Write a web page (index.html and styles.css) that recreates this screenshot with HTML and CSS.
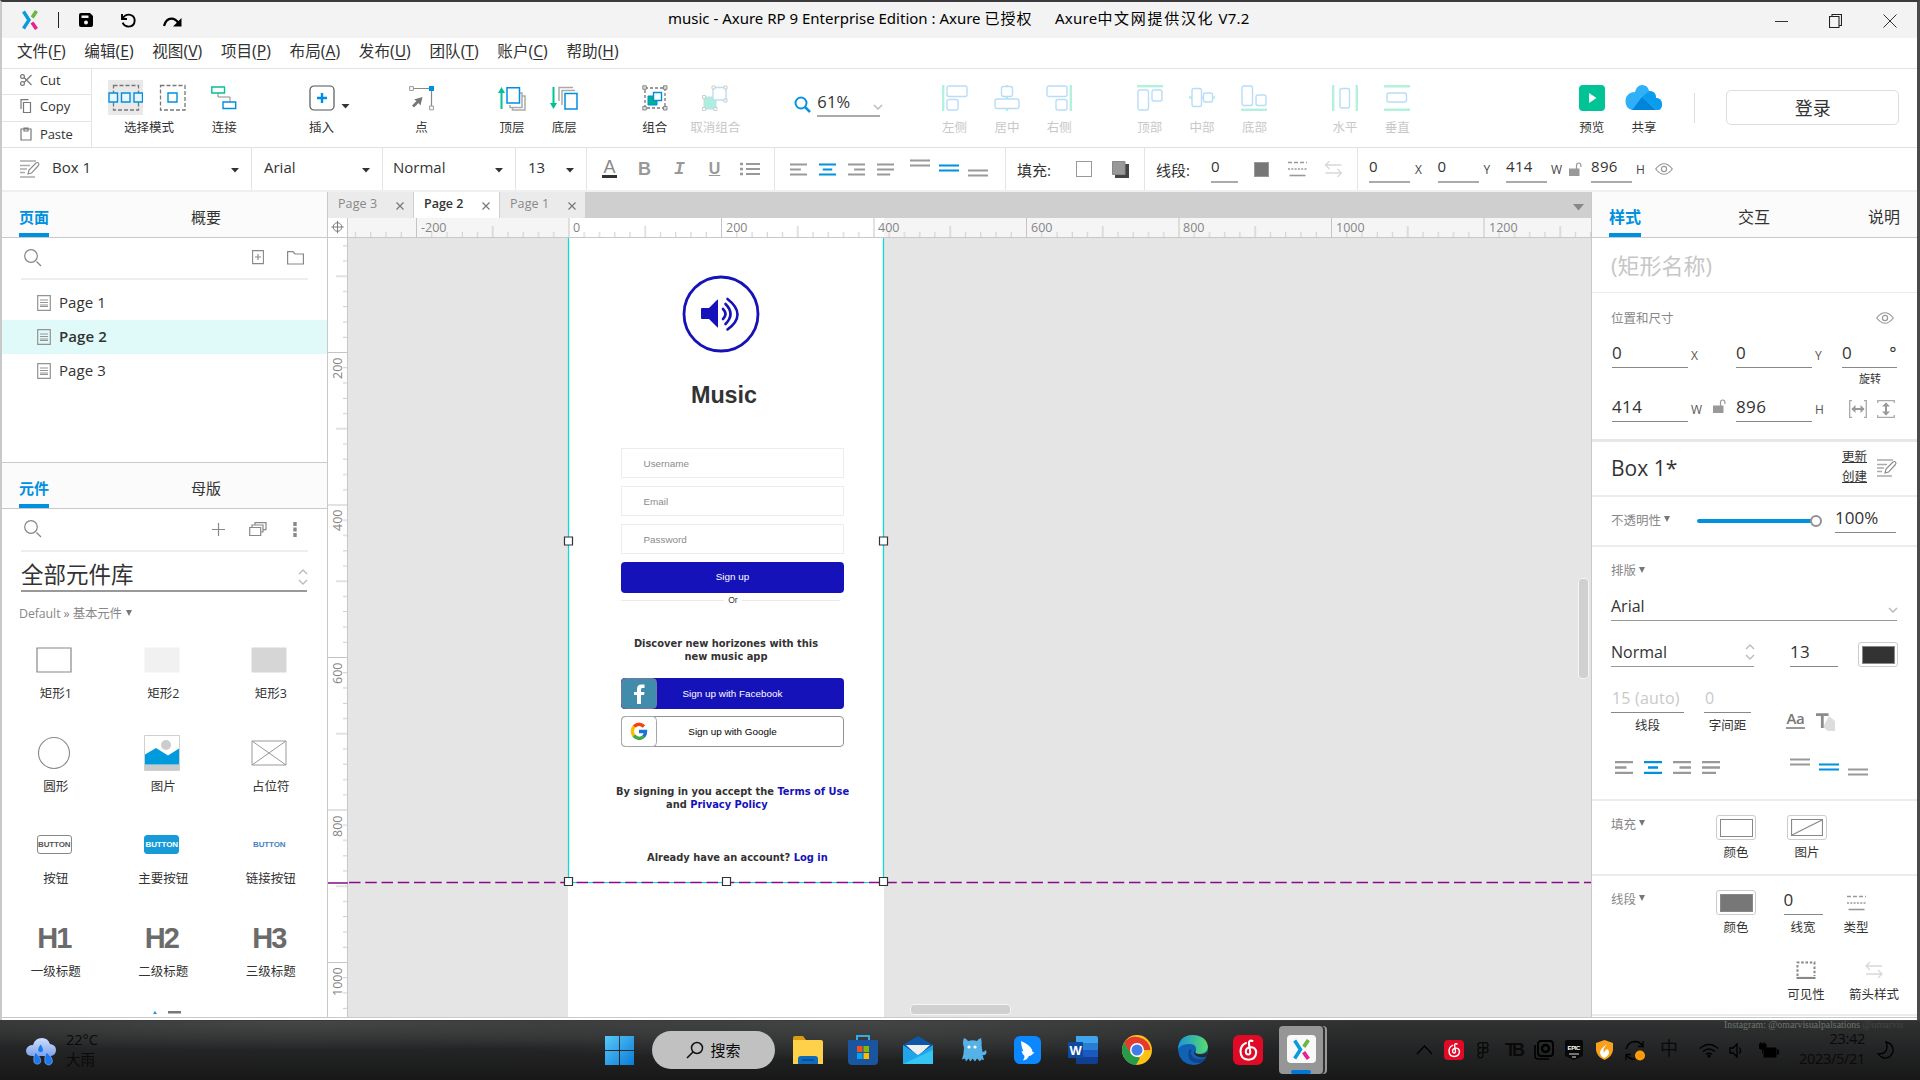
FILE: index.html
```html
<!DOCTYPE html>
<html lang="zh-CN">
<head>
<meta charset="utf-8">
<title>music - Axure RP 9 Enterprise Edition</title>
<link rel="stylesheet" href="styles.css">
</head>
<body>
<svg class="defs" width="0" height="0">
  <symbol id="logo" viewBox="0 0 16 20"><path d="M1.5 1.5 7 10 1.5 18.500" fill="none" stroke="#0a9bdc" stroke-width="3.400"/><path d="M14.500 1 10.200 7.500" stroke="#6cb644" stroke-width="3.600"/><path d="M10 12.500 14.500 19" stroke="#e5258c" stroke-width="3.600"/></symbol>
  <symbol id="search" viewBox="0 0 18 18"><circle cx="7" cy="7" r="6.300" fill="none" stroke="#858585" stroke-width="1.200"/><path d="m12.500 12.500 4.500 4.500" stroke="#858585" stroke-width="1.300"/></symbol>
  <symbol id="page" viewBox="0 0 14 16"><path d="M.7.7h12.600v14.600H.7zM3 5h8M3 7.500h8M3 10h8M3 11.500h8" fill="none" stroke="#939393" stroke-width="1.200"/></symbol>
  <symbol id="caret" viewBox="0 0 8 5"><path d="M0 0h8L4 4.500z" fill="#333"/></symbol>
  <symbol id="down" viewBox="0 0 10 6"><path d="m1 1 4 4 4-4" fill="none" stroke="#bbb" stroke-width="1.500"/></symbol>
  <symbol id="updown" viewBox="0 0 10 16"><path d="m1 5 4-4 4 4M1 11l4 4 4-4" fill="none" stroke="#bbb" stroke-width="1.400"/></symbol>
  <symbol id="edit" viewBox="0 0 20 18"><path d="M0 1h16M0 5.500h10M0 9h7M0 12.500h5M0 17h15" stroke="#aaa" stroke-width="1.500"/><path d="m8 14 1-4 7-7q1.500-1 2.500.2T18 6l-6.500 7z" fill="#fff" stroke="#888" stroke-width="1.100"/></symbol>
  <symbol id="eye" viewBox="0 0 18 12"><path d="M.7 6Q9-4.500 17.300 6 9 16.500.7 6z" fill="none" stroke="#999" stroke-width="1.200"/><circle cx="9" cy="6" r="2.600" fill="none" stroke="#999" stroke-width="1.200"/></symbol>
  <symbol id="lock" viewBox="0 0 13 15"><path d="M0 6.500h10.500v7.500H0z" fill="#999"/><path d="M7.500 7V3.500q0-2.500 2.200-2.500t2.200 2.500V5" fill="none" stroke="#999" stroke-width="1.200"/></symbol>
  <symbol id="al" viewBox="0 0 18 13"><path d="M0 1.200h18M0 6.500h11.500M0 11.800h18" stroke="currentColor" stroke-width="2.300"/></symbol>
  <symbol id="ac" viewBox="0 0 18 13"><path d="M0 1.200h18M4 6.500h10M0 11.800h18" stroke="currentColor" stroke-width="2.300"/></symbol>
  <symbol id="ar" viewBox="0 0 18 13"><path d="M0 1.200h18M6.500 6.500H18M0 11.800h18" stroke="currentColor" stroke-width="2.300"/></symbol>
  <symbol id="aj" viewBox="0 0 18 13"><path d="M0 1.200h18M0 6.500h18M0 11.800h14" stroke="currentColor" stroke-width="2.300"/></symbol>
  <symbol id="vt" viewBox="0 0 20 19"><path d="M0 1.500h20M0 6.500h20" stroke="currentColor" stroke-width="2.200"/></symbol>
  <symbol id="vm" viewBox="0 0 20 19"><path d="M0 6.500h20M0 11.500h20" stroke="currentColor" stroke-width="2.200"/></symbol>
  <symbol id="vb" viewBox="0 0 20 19"><path d="M0 11.500h20M0 16.500h20" stroke="currentColor" stroke-width="2.200"/></symbol>
  <symbol id="dash" viewBox="0 0 19 16"><path d="M0 1.500h19" stroke="#999" stroke-width="1.500" stroke-dasharray="4 2"/><path d="M0 8h19" stroke="#999" stroke-width="1.500" stroke-dasharray="2 1.300"/><path d="M1.500 14.500h16" stroke="#999" stroke-width="1.600"/></symbol>
  <symbol id="arrows" viewBox="0 0 18 16"><path d="M5 0 1 4l4 4M1 4h16M13 8l4 4-4 4M17 12H1" fill="none" stroke="#d8d8d8" stroke-width="1.300"/></symbol>
  <symbol id="netease" viewBox="0 0 30 30"><rect width="30" height="30" rx="6" fill="#e00a26"/><path d="M19.500 6q-4-1.500-3.500 3l1.200 7.500q.3 3-2 3t-2.400-3q.1-3.500 4-4.200 6-.7 6.400 5.200-.5 7-7.700 7.200-8-.3-8-8.700.4-6 5.500-8" fill="none" stroke="#fff" stroke-width="2.100" stroke-linecap="round"/></symbol>
</svg>
<div class="desktop">
<div class="window">
  <header class="titlebar">
    <svg class="t-logo" width="16" height="20"><use href="#logo"/></svg>
    <span class="t-bar"></span>
    <svg class="t-save" width="14" height="14" viewBox="0 0 14 14"><path d="M2 0h9l3 3v9q0 2-2 2H2q-2 0-2-2V2q0-2 2-2z"/><path d="M2.500 2.500h7v2.500h-7z" fill="#f3f3f3"/><circle cx="7" cy="9.500" r="2" fill="#f3f3f3"/></svg>
    <svg class="t-undo" width="15" height="15" viewBox="0 0 15 15"><path d="M1 1v5h5M1.500 5.500Q4 1.500 8 1.600q5.500.6 5.700 6-.4 5.700-6 6-4.500-.2-6-4" fill="none" stroke="#000" stroke-width="1.900"/></svg>
    <svg class="t-redo" width="19" height="10" viewBox="0 0 19 10"><path d="M1 9Q3 1.500 8.500 1.600q4 .1 7 4.500" fill="none" stroke="#000" stroke-width="2.200"/><path d="M18.500 1v8.500H10z"/></svg>
    <div class="title"><span class="title-a">music - Axure RP 9 Enterprise Edition : Axure <span>已授权</span></span><span class="title-b">Axure<span>中文网提供汉化</span> V7.2</span></div>
    <div class="winctl">
      <svg width="13" height="14" viewBox="0 0 13 14"><path d="M0 7.500h13" stroke="#333"/></svg>
      <svg width="13" height="14" viewBox="0 0 13 14"><path d="M.5 2.500h9.500v11H.5zM3 2V.5h9.500v11H10.500" fill="none" stroke="#222" stroke-width="1.100"/></svg>
      <svg width="14" height="14" viewBox="0 0 14 14"><path d="m.5.500 13 13M13.500.5l-13 13" stroke="#333"/></svg>
    </div>
  </header>
  <nav class="menubar">
    <span>文件(<u>F</u>)</span><span>编辑(<u>E</u>)</span><span>视图(<u>V</u>)</span><span>项目(<u>P</u>)</span><span>布局(<u>A</u>)</span><span>发布(<u>U</u>)</span><span>团队(<u>T</u>)</span><span>账户(<u>C</u>)</span><span>帮助(<u>H</u>)</span>
  </nav>
  <div class="toolbar">
    <div class="clip">
      <div><svg width="12" height="12" viewBox="0 0 12 12"><g fill="none" stroke="#777" stroke-width="1.200"><circle cx="2.500" cy="2.500" r="1.900"/><circle cx="2.500" cy="9.500" r="1.900"/><path d="m4 3.500 7.500 7.500M4 8.500 11.500 1"/></g></svg>Cut</div>
      <div><svg width="12" height="14" viewBox="0 0 12 14"><path d="M3.500 3.500h7v10h-7zM1 10V.7h7.500" fill="none" stroke="#777" stroke-width="1.200"/></svg>Copy</div>
      <div><svg width="12" height="14" viewBox="0 0 12 14"><path d="M1 2h10v11H1zM4 1h4v3H4z" fill="none" stroke="#777" stroke-width="1.200"/></svg>Paste</div>
    </div>
    <div class="modes">
      <div class="mode-icons">
        <svg class="on" width="35" height="35" viewBox="0 0 35 35"><path d="M5.500 5.500h25v24.500h-25z" fill="none" stroke="#777" stroke-width="1.300" stroke-dasharray="4 2"/><path d="M1 13h8.500v9H1zM13.500 13h8.500v9h-8.500zM26 13h8.500v9H26z" fill="#e9f6ff" stroke="#008fe0" stroke-width="1.400"/></svg>
        <svg width="35" height="35" viewBox="0 0 35 35"><path d="M5.500 5.500h24.500v24.500H5.500z" fill="none" stroke="#777" stroke-width="1.300" stroke-dasharray="4 2"/><path d="M13 13h9v9h-9z" fill="#fff" stroke="#008fe0" stroke-width="1.400"/></svg>
      </div>
      <span>选择模式</span>
    </div>
    <div class="tools g-link">
      <div class="tool"><svg width="26" height="26" viewBox="0 0 26 26"><path d="M7 7.500V12h12v5" fill="none" stroke="#888"/><path d="M.8 2h12.700v6H.8z" fill="#fff" stroke="#00c292" stroke-width="1.400"/><path d="M12 17h12.700v6.500H12z" fill="#fff" stroke="#008fe0" stroke-width="1.400"/></svg>连接</div>
    </div>
    <div class="tools g-insert">
      <div class="tool"><svg width="26" height="26" viewBox="0 0 26 26"><rect x="1" y="1" width="24" height="24" rx="4" fill="#fff" stroke="#555" stroke-width="1.200"/><path d="M13 8v10M8 13h10" stroke="#008fe0" stroke-width="2.400"/></svg>插入</div>
      <svg class="ins-caret" width="9" height="5"><use href="#caret"/></svg>
    </div>
    <div class="tools g-point">
      <div class="tool"><svg width="26" height="26" viewBox="0 0 26 26"><path d="M3 3.500h19.500v20" fill="none" stroke="#888" stroke-width="1.200"/><path d="M.6 1.600h3.800v3.800H.6zM20.600 21h3.800v3.800h-3.800z" fill="#fff" stroke="#999"/><path d="M20 1h5v5h-5z" fill="#008fe0"/><path d="M13.500 12 11.500 20.500 9.500 18 5 22.500l-2-2L7.500 16 5 14.500z" fill="#777"/></svg>点</div>
    </div>
    <div class="tools g-order">
      <div class="tool"><svg width="28" height="26" viewBox="0 0 28 26"><path d="M12 20v2.500h12V8h-2.500M14.500 23v2h12.500V11h-2.500" fill="none" stroke="#aaa" stroke-width="1.500"/><path d="M9 2.800h12.500V18H9z" fill="#fff" stroke="#008fe0" stroke-width="1.500"/><path d="M3.500 24V5" stroke="#00c292" stroke-width="2"/><path d="m0 8 3.500-6L7 8z" fill="#00c292"/></svg>顶层</div>
      <div class="tool"><svg width="28" height="26" viewBox="0 0 28 26"><path d="M9 16V2.500h14M12 20V5.500h13" fill="none" stroke="#aaa" stroke-width="1.500"/><path d="M15 8.500h12V24H15z" fill="#fff" stroke="#008fe0" stroke-width="1.500"/><path d="M3.500 2v18" stroke="#00c292" stroke-width="2"/><path d="m0 18 3.500 6L7 18z" fill="#00c292"/></svg>底层</div>
    </div>
    <div class="tools g-group">
      <div class="tool"><svg width="26" height="26" viewBox="0 0 26 26"><path d="M3 3h20v20H3z" fill="none" stroke="#777" stroke-width="1.300" stroke-dasharray="3 2"/><path d="M.8.8h3.500v3.500H.8zM21.500.8H25v3.500h-3.500zM.8 21.500h3.500V25H.8zM21.500 21.500H25V25h-3.500z" fill="#ddd" stroke="#888"/><path d="M6 11h9v9H6z" fill="#00b090" stroke="#008fe0"/><path d="M11.500 7.500h8v8h-8z" fill="#fff" stroke="#008fe0" stroke-width="1.400"/></svg>组合</div>
      <div class="tool off"><svg width="26" height="26" viewBox="0 0 26 26"><path d="M2 12h12v12H2z" fill="#aeeedd" stroke="#b9dff3"/><path d="M11 2.500h13V15H11z" fill="#fff" stroke="#b9dff3" stroke-width="1.400"/><path d="M10 1h3v3h-3zM22 1h3v3h-3zM22 14h3v3h-3zM.6 10.500h3v3h-3zM.6 22.500h3v3h-3zM12 22.500h3v3h-3z" fill="#fff" stroke="#ccc"/></svg>取消组合</div>
    </div>
    <div class="zoom">
      <svg width="17" height="17" viewBox="0 0 17 17"><circle cx="7" cy="7" r="5.500" fill="none" stroke="#0a92e0" stroke-width="2"/><path d="m11 11 5 5" stroke="#0a92e0" stroke-width="2.500"/></svg>
      <div class="zoom-field">61%<svg width="10" height="6"><use href="#down"/></svg></div>
    </div>
    <div class="tools off g-h">
      <div class="tool"><svg width="26" height="26" viewBox="0 0 26 26"><path d="M1.200 0v26" class="gr"/><rect x="5" y="1" width="20" height="10.500" rx="2"/><rect x="5" y="14.500" width="11" height="10.500" rx="2"/></svg>左侧</div>
      <div class="tool"><svg width="26" height="26" viewBox="0 0 26 26"><path d="M13-1v27" class="gr"/><rect x="7.500" y="1.500" width="11" height="10" rx="2"/><rect x="1" y="14" width="24" height="9.500" rx="2"/></svg>居中</div>
      <div class="tool"><svg width="26" height="26" viewBox="0 0 26 26"><path d="M24.800 0v26" class="gr"/><rect x="1" y="1" width="20" height="10.500" rx="2"/><rect x="10" y="14.500" width="11" height="10.500" rx="2"/></svg>右侧</div>
    </div>
    <div class="tools off g-v">
      <div class="tool"><svg width="26" height="26" viewBox="0 0 26 26"><path d="M0 1.200h26" class="gr"/><rect x="1" y="5" width="10.500" height="20" rx="2"/><rect x="15" y="5" width="10" height="11" rx="2"/></svg>顶部</div>
      <div class="tool"><svg width="26" height="26" viewBox="0 0 26 26"><path d="M0 12.500h26" class="gr"/><rect x="3" y="3.500" width="9.500" height="18" rx="2"/><rect x="14.500" y="8" width="9" height="9" rx="2"/></svg>中部</div>
      <div class="tool"><svg width="26" height="26" viewBox="0 0 26 26"><path d="M0 24.800h26" class="gr"/><rect x="1" y="1" width="10.500" height="19.500" rx="2"/><rect x="15" y="10" width="10" height="10.500" rx="2"/></svg>底部</div>
    </div>
    <div class="tools off g-d">
      <div class="tool"><svg width="26" height="26" viewBox="0 0 26 26"><path d="M1.200 0v26M24.800 0v26" class="gr"/><rect x="8" y="3.500" width="9.500" height="19.500" rx="2"/></svg>水平</div>
      <div class="tool"><svg width="26" height="26" viewBox="0 0 26 26"><path d="M0 1.200h26M0 24.800h26" class="gr"/><rect x="3" y="8" width="19.500" height="9" rx="2"/></svg>垂直</div>
    </div>
    <div class="tools g-share">
      <div class="tool"><svg width="26" height="26" viewBox="0 0 26 26"><rect width="26" height="26" rx="4" fill="#00c496"/><path d="m10 8 7.500 5-7.500 5z" fill="#fff"/></svg>预览</div>
      <div class="tool"><svg width="38" height="26" viewBox="0 0 38 26"><path d="M7 25Q0 23 .5 15 2 7 10 7q2-7 7-7 6 0 7 6 7 0 7 7 6 0 6 7-.5 5-4 5z" fill="#2fb0f8"/><path d="M7 25 17 12l14 13z" fill="#0085dc"/><path d="m17 12 7-6q7 0 7 7 6 0 6 7-.5 5-5 5z" fill="#0c9cee"/></svg>共享</div>
    </div>
    <div class="login"><span>登录</span></div>
  </div>
  <div class="formatbar">
    <div class="f f1"><svg width="20" height="18"><use href="#edit"/></svg><span>Box 1</span><svg class="c" width="8" height="5"><use href="#caret"/></svg></div>
    <div class="f f2"><span>Arial</span><svg class="c" width="8" height="5"><use href="#caret"/></svg></div>
    <div class="f f3"><span>Normal</span><svg class="c" width="8" height="5"><use href="#caret"/></svg></div>
    <div class="f f4"><span>13</span><svg class="c" width="8" height="5"><use href="#caret"/></svg></div>
    <div class="f f5">
      <b class="fa">A</b><b>B</b><b class="fi">I</b><b class="fu">U</b>
      <svg width="20" height="14" viewBox="0 0 20 14"><path d="M6 2h14M6 7h14M6 12h14" stroke="#999" stroke-width="1.800"/><path d="M0 2h3M0 7h3M0 12h3" stroke="#999" stroke-width="2.500"/></svg>
    </div>
    <div class="f f6">
      <svg width="17" height="13"><use href="#al"/></svg><svg class="blue" width="17" height="13"><use href="#ac"/></svg><svg width="17" height="13"><use href="#ar"/></svg><svg width="17" height="13"><use href="#aj"/></svg>
      <svg class="v1" width="20" height="19"><use href="#vt"/></svg><svg class="v2 blue" width="20" height="19"><use href="#vm"/></svg><svg class="v2" width="20" height="19"><use href="#vb"/></svg>
    </div>
    <div class="f f7"><span>填充:</span><i class="sw-w"></i><svg width="17" height="17" viewBox="0 0 17 17"><path d="M3 3h14v14H3z" fill="#444"/><path d="M.5.500h12.500v13H.5z" fill="#999" stroke="#888"/></svg></div>
    <div class="f f8"><span>线段:</span><div class="uf u0">0</div><i class="sw-g"></i><svg class="d1" width="19" height="16"><use href="#dash"/></svg><svg class="d2" width="19" height="16"><use href="#arrows"/></svg></div>
    <div class="f f9"><div class="uf">0</div><em>X</em><div class="uf">0</div><em>Y</em><div class="uf">414</div><em class="ew">W</em><svg class="lk" width="13" height="15"><use href="#lock"/></svg><div class="uf">896</div><em class="eh">H</em><svg width="18" height="12"><use href="#eye"/></svg></div>
  </div>
  <main class="work">
    <aside class="left">
      <div class="ptabs"><b>页面</b><span>概要</span></div>
      <div class="pages">
        <div class="psearch"><svg width="18" height="18"><use href="#search"/></svg>
          <svg class="s-add" width="12" height="15" viewBox="0 0 12 15"><path d="M.6.6h10.800v13H.6zM6 4v6M3 7h6" fill="none" stroke="#888" stroke-width="1.100"/></svg>
          <svg width="17" height="14" viewBox="0 0 17 14"><path d="M.6.6h5.400l2 2.400h8.400v10H.6z" fill="none" stroke="#888" stroke-width="1.200"/></svg></div>
        <div class="tree">
          <div><svg width="14" height="16"><use href="#page"/></svg>Page 1</div>
          <div class="sel"><svg width="14" height="16"><use href="#page"/></svg>Page 2</div>
          <div><svg width="14" height="16"><use href="#page"/></svg>Page 3</div>
        </div>
      </div>
      <div class="ptabs"><b>元件</b><span>母版</span></div>
      <div class="lib">
        <div class="psearch"><svg width="18" height="18"><use href="#search"/></svg>
          <svg class="s-plus" width="13" height="13" viewBox="0 0 13 13"><path d="M6.500 0v13M0 6.500h13" stroke="#888" stroke-width="1.200"/></svg>
          <svg class="s-cards" width="18" height="14" viewBox="0 0 18 14"><path d="M.7 5.500h11v8h-11zM3 5V3h11v7h-2M6 2.500V.7h11v7h-2.500" fill="none" stroke="#888" stroke-width="1.200"/></svg>
          <svg width="4" height="15" viewBox="0 0 4 15"><path d="M2 0v4M2 5.500v4M2 11v4" stroke="#888" stroke-width="3.400"/></svg></div>
        <div class="libsel">全部元件库<svg width="10" height="16"><use href="#updown"/></svg></div>
        <div class="crumb">Default » 基本元件 <svg width="6" height="6" viewBox="0 0 6 6"><path d="M0 0h6L3 6z" fill="#777"/></svg></div>
        <div class="widgets">
          <div><svg width="36" height="36" viewBox="0 0 36 36"><path d="M1 6h34v24H1z" fill="#fff" stroke="#888" stroke-width="1.200"/></svg>矩形1</div>
          <div><svg width="36" height="36" viewBox="0 0 36 36"><path d="M.5 5.500h35v25H.5z" fill="#f1f1f1"/></svg>矩形2</div>
          <div><svg width="36" height="36" viewBox="0 0 36 36"><path d="M.5 5.500h35v25H.5z" fill="#d6d6d6"/></svg>矩形3</div>
          <div><svg width="36" height="36" viewBox="0 0 36 36"><circle cx="18" cy="18" r="15.500" fill="#fff" stroke="#888" stroke-width="1.100"/></svg>圆形</div>
          <div><svg width="36" height="36" viewBox="0 0 36 36"><path d="M.5.500h35v35H.5z" fill="#fff" stroke="#d0d0d0"/><path d="M1 29.500h34V35H1z" fill="#cacaca"/><circle cx="22" cy="10" r="5" fill="#ccc"/><path d="M1 19.500 12 13l12 7.500L35 13.500v16H1z" fill="#009bdc"/></svg>图片</div>
          <div><svg width="36" height="36" viewBox="0 0 36 36"><path d="M1 6h34v24H1zl34 24M35 6 1 30" fill="#fff" stroke="#999"/></svg>占位符</div>
          <div><span class="wb">BUTTON</span>按钮</div>
          <div><span class="wb wb2">BUTTON</span>主要按钮</div>
          <div><span class="wb wb3">BUTTON</span>链接按钮</div>
          <div><span class="wh">H1</span>一级标题</div>
          <div><span class="wh">H2</span>二级标题</div>
          <div><span class="wh">H3</span>三级标题</div>
        </div>
        <svg class="peek" width="28" height="3" viewBox="0 0 28 3"><path d="m0 3 2-3 2 3z" fill="#179bd8"/><path d="M15 0h13v2.500H15z" fill="#777"/></svg>
      </div>
    </aside>
    <section class="center">
      <div class="tabs">
        <div>Page 3<svg width="8" height="8" viewBox="0 0 8 8"><path d="m.5.500 7 7m0-7-7 7" stroke="#777" stroke-width="1.200"/></svg></div>
        <div class="on">Page 2<svg width="8" height="8" viewBox="0 0 8 8"><path d="m.5.500 7 7m0-7-7 7" stroke="#777" stroke-width="1.200"/></svg></div>
        <div>Page 1<svg width="8" height="8" viewBox="0 0 8 8"><path d="m.5.500 7 7m0-7-7 7" stroke="#777" stroke-width="1.200"/></svg></div>
        <svg class="more" width="11" height="7" viewBox="0 0 11 7"><path d="M0 0h11L5.500 6.500z" fill="#888"/></svg>
      </div>
      <div class="stage">
        <svg class="corner" width="20" height="20" viewBox="0 0 20 20"><circle cx="10" cy="9.500" r="4.500" fill="none" stroke="#777"/><path d="M10 3v13M3.500 9.500h13" stroke="#777"/></svg>
        <svg class="rh" width="1243" height="20" viewBox="348 218 1243 20">
          <defs><pattern id="ph" patternUnits="userSpaceOnUse" x="568.500" y="218" width="152.500" height="20"><path d="M.5 0v20" stroke="#c4c4c4"/><path d="M76.750 8v12" stroke="#c4c4c4"/><path d="M15.750 14v6m15.250-6v6m15.250-6v6m15.250-6v6m30.500-6v6m15.250-6v6m15.250-6v6m15.250-6v6" stroke="#ccc"/></pattern></defs>
          <path d="M348 218h1243v20H348z" fill="#f5f5f5"/><path d="M569 218h315v20H569z" fill="#fff"/><path d="M348 218h1243v20H348z" fill="url(#ph)"/>
          <g class="rl"><text x="421" y="232">-200</text><text x="573" y="232">0</text><text x="726" y="232">200</text><text x="878" y="232">400</text><text x="1031" y="232">600</text><text x="1183" y="232">800</text><text x="1336" y="232">1000</text><text x="1489" y="232">1200</text></g>
          <path d="M348 237.500h1243" stroke="#c8c8c8"/>
        </svg>
        <svg class="rv" width="20" height="779" viewBox="328 238 20 779">
          <defs><pattern id="pv" patternUnits="userSpaceOnUse" x="328" y="199.500" width="20" height="152.500"><path d="M0 .5h20M8 76.750h12" stroke="#c4c4c4"/><path d="M15 15.750h5m-5 15.250h5m-5 15.250h5m-5 15.250h5m-5 30.500h5m-5 15.250h5m-5 15.250h5m-5 15.250h5" stroke="#ccc"/></pattern></defs>
          <path d="M328 238h20v779h-20z" fill="#fff"/><path d="M328 238h20v779h-20z" fill="url(#pv)"/>
          <g class="rl"><text transform="translate(342 379)rotate(-90)">200</text><text transform="translate(342 531)rotate(-90)">400</text><text transform="translate(342 684)rotate(-90)">600</text><text transform="translate(342 837)rotate(-90)">800</text><text transform="translate(342 996)rotate(-90)">1000</text></g>
          <path d="M347.500 238v779" stroke="#c8c8c8"/><path d="M328 883h20" stroke="#a545a5" stroke-width="2"/>
        </svg>
        <div class="canvas">
          <div class="paper"></div>
          <svg class="w sound" width="78" height="78" viewBox="0 0 78 78"><circle cx="39" cy="39" r="37" fill="#fff" stroke="#1612b9" stroke-width="2.800"/><path d="M19 34q0-1 1-1h7l8-8q1-1 1 0v27q0 1-1 0l-8-8h-7q-1 0-1-1z" fill="#1612b9"/><path d="M41 34q5 5 0 10M43.500 29q10 10 0 20M45.500 24q20 15.500 0 30.500" fill="none" stroke="#1612b9" stroke-width="2.600" stroke-linecap="round"/></svg>
          <div class="w music">Music</div>
          <div class="w inp i1">Username</div><div class="w inp i2">Email</div><div class="w inp i3">Password</div>
          <div class="w btn b1">Sign up</div>
          <div class="w or"><i></i>Or<i></i></div>
          <div class="w vb disc">Discover new horizones with this<br>new music app</div>
          <div class="w btn b2">Sign up with Facebook</div>
          <svg class="w fb" width="36" height="31" viewBox="0 0 36 31"><rect x=".5" y=".5" width="35" height="30" rx="4" fill="#428cab" stroke="#76779a"/><path d="M16 26v-9h-3v-3h3v-3q0-4.500 4.500-4.500h3V10h-2.500Q20 10 20 11.500V14h3.500l-.5 3h-3v9z" fill="#fff"/></svg>
          <div class="w btn b3">Sign up with Google</div>
          <svg class="w gg" width="36" height="31" viewBox="0 0 36 31"><rect x=".5" y=".5" width="35" height="30" rx="4" fill="#fff" stroke="#a5a5a5"/><g fill="none" stroke-width="3.400"><path d="M23 10.500Q18 6 13 10.500" stroke="#f4440e"/><path d="M13 10.500q-3.300 4.500 0 9.500" stroke="#fbbc05"/><path d="M12.800 19.700q5 5 10 .8" stroke="#43a843"/><path d="M18 15.500h6.500q0 3-1.900 5" stroke="#1a73d4"/></g></svg>
          <div class="w vb terms">By signing in you accept the <a>Terms of Use</a></div>
          <div class="w vb priv">and <a>Privacy Policy</a></div>
          <div class="w vb acct">Already have an account? <a>Log in</a></div>
          <svg class="w guides" width="1243" height="779" viewBox="348 238 1243 779"><path d="M568.500 238v644.500h315V238" fill="none" stroke="#00dede" stroke-width="1.200"/><path d="M349 882.500h1242" stroke="#8a0a8a" stroke-width="1.300" stroke-dasharray="11.500 4.750"/><g fill="#fff" stroke="#333" stroke-width="1.200"><path d="M564.500 537h8v8h-8zM879.500 537h8v8h-8zM564.500 877.500h8v8h-8zM722.500 877.500h8v8h-8zM879.500 877.500h8v8h-8z"/></g></svg>
          <div class="w sbh"></div><div class="w sbv"></div>
        </div>
      </div>
    </section>
    <aside class="right">
      <div class="ptabs rt"><b>样式</b><span>交互</span><span>说明</span></div>
      <div class="s s-name">(矩形名称)</div>
      <div class="s s-pos">
        <div class="hd"><span>位置和尺寸</span><svg width="18" height="12"><use href="#eye"/></svg></div>
        <div class="row"><div class="n">0</div><em class="w48">X</em><div class="n">0</div><em class="w30">Y</em><div class="n n55">0<i>°</i></div></div>
        <div class="rot">旋转</div>
        <div class="row"><div class="n">414</div><em class="w25">W</em><svg class="lk2" width="13" height="15"><use href="#lock"/></svg><div class="n">896</div><em class="w37">H</em>
          <svg width="18" height="18" viewBox="0 0 18 18"><path d="M3 .7H.7v16.600H3M15 .7h2.300v16.600H15" fill="none" stroke="#aaa" stroke-width="1.300"/><path d="M3 9h12" stroke="#999" stroke-width="2"/><path d="m6.500 5-4 4 4 4zM11.500 5l4 4-4 4z" fill="#999"/></svg>
          <svg class="ml" width="18" height="18" viewBox="0 0 18 18"><path d="M.7 3V.7h16.600V3M.7 15v2.300h16.600V15" fill="none" stroke="#aaa" stroke-width="1.300"/><path d="M9 3v12" stroke="#999" stroke-width="2"/><path d="m5 6.500 4-4 4 4zM5 11.500l4 4 4-4z" fill="#999"/></svg></div>
      </div>
      <div class="s s-style"><span class="big">Box 1*</span><div class="upd"><u>更新</u><u>创建</u></div><svg width="20" height="18"><use href="#edit"/></svg></div>
      <div class="s s-op"><span class="lbl">不透明性<svg width="6" height="6" viewBox="0 0 6 6"><path d="M0 0h6L3 6z" fill="#777"/></svg></span><div class="slider"><i></i></div><div class="n n61">100%</div></div>
      <div class="s s-ty">
        <span class="lbl tl">排版<svg width="6" height="6" viewBox="0 0 6 6"><path d="M0 0h6L3 6z" fill="#777"/></svg></span>
        <div class="sel1">Arial<svg width="10" height="6"><use href="#down"/></svg></div>
        <div class="r2"><div class="sel2">Normal<svg width="10" height="16"><use href="#updown"/></svg></div><div class="n n48">13</div><div class="swatch"><i class="dk"></i></div></div>
        <div class="r3"><div class="st73"><div class="n ph">15 (auto)</div><span>线段</span></div><div class="st47"><div class="n ph">0</div><span>字间距</span></div>
          <span class="aa">Aa</span>
          <svg class="tt" width="20" height="18" viewBox="0 0 20 18"><path d="m13 3 6 5v10h-7l-5-4z" fill="#ddd"/><path d="M0 1.700h12.500M6.300 2v13" stroke="#8b8b8b" stroke-width="2.800"/></svg></div>
        <div class="r4"><svg width="18" height="13"><use href="#al"/></svg><svg class="blue" width="18" height="13"><use href="#ac"/></svg><svg width="18" height="13"><use href="#ar"/></svg><svg width="18" height="13"><use href="#aj"/></svg>
          <svg class="v1" width="20" height="19"><use href="#vt"/></svg><svg class="v2 blue" width="20" height="19"><use href="#vm"/></svg><svg class="v2" width="20" height="19"><use href="#vb"/></svg></div>
      </div>
      <div class="s s-fill"><span class="lbl">填充<svg width="6" height="6" viewBox="0 0 6 6"><path d="M0 0h6L3 6z" fill="#777"/></svg></span>
        <div class="st"><div class="swatch"><i></i></div>颜色</div>
        <div class="st m31"><div class="swatch"><svg width="32" height="17" viewBox="0 0 32 17"><path d="M.5.500h31v16H.5zM1 16 31 1" fill="none" stroke="#888" stroke-width="1.200"/></svg></div>图片</div></div>
      <div class="s s-line">
        <div class="lr"><span class="lbl">线段<svg width="6" height="6" viewBox="0 0 6 6"><path d="M0 0h6L3 6z" fill="#777"/></svg></span>
          <div class="st"><div class="swatch"><i class="gy"></i></div>颜色</div>
          <div class="st m27"><div class="n n40">0</div>线宽</div>
          <div class="st m13"><div class="ic"><svg width="19" height="16"><use href="#dash"/></svg></div>类型</div></div>
        <div class="lr2"><div class="st"><div class="ic"><svg width="20" height="18" viewBox="0 0 20 18"><path d="M1.500 15V1.500h17V15" fill="none" stroke="#888" stroke-width="2" stroke-dasharray="2.500 1.800"/><path d="M.5 17h19" stroke="#888" stroke-width="2.200"/></svg></div>可见性</div>
          <div class="st st52"><div class="ic"><svg width="18" height="16"><use href="#arrows"/></svg></div>箭头样式</div></div>
      </div>
    </aside>
  </main>
</div>
<footer class="taskbar">
  <svg class="weather" width="30" height="28" viewBox="0 0 30 28"><defs><linearGradient id="cl" x2="0" y2="1"><stop stop-color="#cfe0ff"/><stop offset="1" stop-color="#7fa2e8"/></linearGradient></defs><path d="M7 18Q0 18 0 12.500 1 7 7 7q2-7 9-7 6 0 8 6 6 1 6 6t-5 6z" fill="url(#cl)"/><path d="M14.500 6q4 5 2.500 7.500t-5 0Q11 11 14.500 6zM9 14q7 6 5.500 10.500-3 3.500-6.500 0-1-4 1-10.500zM20 14q8 6 6 11-3 4-7 0-1-4 1-11z" fill="#1c78f2" stroke="#cfe2ff" stroke-width=".4"/></svg>
  <div class="wx"><span>22°C</span><span>大雨</span></div>
  <div class="apps">
    <svg width="29" height="29" viewBox="0 0 30 30"><defs><linearGradient id="wn" x2="1" y2="1"><stop stop-color="#58c9f8"/><stop offset="1" stop-color="#0a7bd6"/></linearGradient></defs><path d="M0 0h14.500v14.500H0zM15.500 0H30v14.500H15.500zM0 15.500h14.500V30H0zM15.500 15.500H30V30H15.500z" fill="url(#wn)"/></svg>
    <div class="tsearch"><svg width="18" height="18" viewBox="0 0 18 18"><circle cx="11" cy="7" r="5.500" fill="none" stroke="#111" stroke-width="1.500"/><path d="m7 11-6 6" stroke="#111" stroke-width="1.600"/></svg>搜索</div>
    <svg class="a-dir" width="30" height="28" viewBox="0 0 30 28"><path d="M0 2q0-2 2-2h8l3 4h-13z" fill="#d99c10"/><path d="M0 4h28q2 0 2 2v22H0z" fill="#ffd04a"/><path d="M5 28v-5q0-3 3-3h14q3 0 3 3v5z" fill="#0f6cbd"/><path d="M9 24h12" stroke="#0a4d92" stroke-width="1.500"/></svg>
    <svg class="a-store" width="30" height="30" viewBox="0 0 30 30"><path d="M9 6V1h12v5" fill="none" stroke="#35a8e8" stroke-width="2"/><path d="M0 5h30v21q0 4-4 4H4q-4 0-4-4z" fill="#1a56a0"/><path d="M9 11h5.500v6H9z" fill="#f25022"/><path d="M15.500 11H21v6h-5.500z" fill="#7fba00"/><path d="M9 18h5.500v6H9z" fill="#00a4ef"/><path d="M15.500 18H21v6h-5.500z" fill="#ffb900"/></svg>
    <svg class="a-mail" width="30" height="28" viewBox="0 0 30 28"><path d="M0 9 15 0l15 9v19H0z" fill="#0d56a8"/><path d="M3 9h24L15 20z" fill="#eee"/><path d="m0 9 15 10L30 9v19H0z" fill="#21a4e8"/><path d="m0 28 30-14v14z" fill="#36c6f4"/></svg>
    <svg class="a-ghost" width="26" height="26" viewBox="0 0 26 26"><path d="M3 1q3 1 4 3 5-1.500 9 0 1-2 4-3 1 4 .5 7l1 7q2 0 3-2 2 2 0 4.500-1.500 1-3 .5l1.500 5-3-.5-1 2-3-3-2 3-2.500-3-2 3-2-3-2.500 3-1-3-3 1q2-6 2-12Q1 5 3 1z" fill="#56b2e6"/><circle cx="8" cy="10" r="1.600" fill="#fff"/><circle cx="14" cy="10" r="1.600" fill="#fff"/></svg>
    <svg class="a-bird" width="27" height="28" viewBox="0 0 27 28"><rect width="27" height="28" rx="6" fill="#0b87ff"/><path d="M7 5q9 4 11 8.500l.5 2.500 2 .5-3.500 3-2 .5q-2 4-6 4.500 1.500-2 1.500-4.500-2.500-2.500-3-5l2 .5Q7.500 12 7 5z" fill="#fff"/></svg>
    <svg class="a-word" width="30" height="28" viewBox="0 0 30 28"><path d="M8 0h20q2 0 2 2v5H8z" fill="#41a5ee"/><path d="M8 7h22v7H8z" fill="#2b7cd3"/><path d="M8 14h22v7H8z" fill="#185abd"/><path d="M8 21h22v5q0 2-2 2H8z" fill="#103f91"/><path d="M0 6h15v16H0z" fill="#0f4aa0"/><text x="1.500" y="18.500" class="wd">W</text></svg>
    <svg class="a-chrome" width="30" height="30" viewBox="0 0 30 30"><circle cx="15" cy="15" r="15" fill="#fbc116"/><path d="M15 15H28.500A15 15 0 0 0 2 7.500L8.500 19z" fill="#e33b2e"/><path d="m2 7.500 7 11.500 9 4-4 7A15 15 0 0 1 2 7.500z" fill="#269b49"/><circle cx="15" cy="15" r="7" fill="#fff"/><circle cx="15" cy="15" r="5.500" fill="#3f7de8"/></svg>
    <svg class="a-edge" width="30" height="30" viewBox="0 0 30 30"><defs><linearGradient id="eg" x2="1"><stop stop-color="#1a93dc"/><stop offset="1" stop-color="#58dd6a"/></linearGradient></defs><path d="M0 14A15 15 0 1 1 28 22q-3 7-12 8Q1 29 0 14z" fill="#0f62b4"/><path d="M0 14Q1 0 15 0q14 1 15 12-1 7-9 7-5 0-3-3 1-7-6-7Q3 9 0 14z" fill="url(#eg)"/><path d="M11 15q-3 13 10 13 5-1 7-5-9 3-13-1-4-4-1-8z" fill="#14438c"/><path d="M17 15q-3 5 4 7 5 1 7.500-1l1.500-5q-3 4-9 3-5 0-4-4z" fill="#262728"/></svg>
    <svg class="a-ne" width="30" height="30"><use href="#netease"/></svg>
    <div class="ax"><div><svg width="17" height="21"><use href="#logo"/></svg></div></div>
  </div>
  <div class="tray">
    <svg width="17" height="10" viewBox="0 0 17 10"><path d="m1 9 7.500-8L16 9" fill="none" stroke="#000" stroke-width="1.300"/></svg>
    <svg class="y1" width="20" height="20"><use href="#netease"/></svg>
    <svg class="y2" width="12" height="17" viewBox="0 0 12 17"><path d="M6 .7H3.500a2.500 2.500 0 0 0 0 5h5a2.500 2.500 0 0 0 0-5H6v13a2.500 2.500 0 1 1-2.500-2.800H6M6 5.700H3.500a2.600 2.600 0 0 0 0 5.200H6" fill="none" stroke="#0a0a0a" stroke-width="1.300"/><circle cx="8.500" cy="8.300" r="2.400" fill="none" stroke="#0a0a0a" stroke-width="1.300"/></svg>
    <b class="tb">TB</b>
    <svg class="y3" width="20" height="20" viewBox="0 0 20 20"><rect x="4" y="1" width="15" height="15" rx="3" fill="none" stroke="#000" stroke-width="1.800"/><path d="M1 5v11q0 3 3 3h11" fill="none" stroke="#000" stroke-width="1.600"/><circle cx="11.500" cy="8.500" r="3.500" fill="none" stroke="#000" stroke-width="2.500"/></svg>
    <svg class="y4" width="18" height="20" viewBox="0 0 18 20"><path d="M2 0h14q2 0 2 2v14l-9 4-9-4V2q0-2 2-2z" fill="#080808"/><text x="2.600" y="10" class="ep">EPIC</text><path d="M4 14h10M7 17h4" stroke="#ddd" stroke-width="1.200"/></svg>
    <svg class="y5" width="17" height="20" viewBox="0 0 17 20"><path d="M8.500 0 17 3v7q-1 7-8.500 10Q1 17 0 10V3z" fill="#f9a11c"/><path d="M11 4q-7 5-7 9 1 4 4 5 5-2 5-6 0-2-2-3-3 2-3 4-2-4 3-9z" fill="#fff"/></svg>
    <svg class="y6" width="20" height="21" viewBox="0 0 20 21"><path d="M1 9Q3 2 10 1.500q5 0 8 5V1m0 5.500h-5M1 14.500v5.500m0-5.500h5M1 14.500Q5 20 10 19" fill="none" stroke="#000" stroke-width="1.300"/><circle cx="15" cy="15.500" r="5" fill="#fe9a0b"/></svg>
    <span class="zh">中</span>
    <svg class="y7" width="20" height="15" viewBox="0 0 20 15"><path d="M1 5.500q9-8 18 0M4 8.500q6-5 12 0M7 11.500q3-2.500 6 0" fill="none" stroke="#000" stroke-width="1.500"/><circle cx="10" cy="13" r="1.500"/></svg>
    <svg class="y8" width="14" height="15" viewBox="0 0 14 15"><path d="M1 5h3l4-4v13l-4-4H1zM10.500 4.500q2 3 0 6" fill="none" stroke="#000" stroke-width="1.300"/></svg>
    <svg class="y9" width="20" height="16" viewBox="0 0 20 16"><path d="M5 6h12v9H5z" stroke="#000"/><path d="M18 8h1.500v4H18M0 2h7v4q-3.500 3-7 0zM2 0v3M5 0v3M3.500 7v4" stroke="#000"/></svg>
    <div class="clock"><span>23:42</span><span>2023/5/21</span></div>
    <svg class="y10" width="17" height="18" viewBox="0 0 17 18"><path d="M9 1q8 2 7 10-3 7-9 6-4-1-6-4 9 0 9-7 0-3-1-5z" fill="none" stroke="#000" stroke-width="1.300"/></svg>
  </div>
  <div class="insta">Instagram: @omarvisualpalsations <span>@omarvis</span></div>
</footer>
</div>
</body>
</html>
```
FILE: styles.css
```css
* { box-sizing: border-box; }
body { margin: 0; font-family: "Open Sans", "Noto Sans CJK SC", sans-serif; color: #333; font-size: 15px; }
svg { display: block; flex: none; }
i, em { font-style: normal; }
.defs { position: absolute; }
.desktop { width: 1920px; height: 1080px; overflow: hidden; display: flex; flex-direction: column; background: #fff; }
.window { height: 1020px; border: solid #4b4b4d; border-width: 2px 3px 0 2px; border-left-color: #c9c9c9; border-top-color: #3c3a3c; background: #fff; flex: none; overflow: hidden; }
.blue { color: #0090e0; }

/* title bar and menus */
.titlebar { height: 36px; background: #f3f3f3; display: flex; align-items: center; padding-left: 20px; font-family: "Noto Sans", "Noto Sans CJK SC", sans-serif; color: #000; }
.t-bar { width: 1px; height: 16px; background: #222; margin-left: 20px; }
.t-save { margin-left: 20px; }
.t-undo { margin-left: 28px; }
.t-redo { margin-left: 27px; margin-top: 3px; }
.title { margin-left: 486px; width: 1096px; display: flex; font-size: 15px; line-height: 20px; white-space: nowrap; margin-top: -4px; }
.title-a { width: 387px; }
.title-a span { letter-spacing: 1px; }
.title-b { letter-spacing: .25px; }
.title-b span { letter-spacing: 1.700px; }
.winctl { display: flex; gap: 41px; margin-left: 11px; margin-top: 2px; }
.menubar { height: 31px; border-bottom: 1px solid #e3e3e3; display: flex; align-items: center; padding: 0 0 4px 15px; gap: 18.700px; font-family: "Noto Sans", "Noto Sans CJK SC", sans-serif; font-size: 15.600px; line-height: 24px; white-space: nowrap; }
.menubar u { text-underline-offset: 2px; text-decoration-thickness: 1px; }

/* toolbar */
.toolbar { height: 79px; border-bottom: 1px solid #e0e0e0; display: flex; align-items: flex-start; font-size: 12.500px; }
.clip { width: 90px; height: 78px; border-right: 1px solid #e4e4e4; font-size: 13px; }
.clip div { height: 26px; display: flex; align-items: center; gap: 8px; padding: 0 0 3px 18px; border-bottom: 1px solid #e4e4e4; letter-spacing: -.1px; }
.clip div + div { height: 27px; padding-bottom: 4px; }
.clip div:last-child { border: 0; padding-bottom: 4px; height: 25px; padding-bottom: 2px; }
.modes { width: 82px; margin-left: 16px; padding-top: 11px; text-align: center; line-height: 26px; }
.mode-icons { display: flex; gap: 12px; }
.mode-icons .on { background: #e9e9e9; }
.tools { display: flex; }
.tool { width: 52.400px; display: flex; flex-direction: column; align-items: center; padding-top: 16px; line-height: 24px; gap: 5px; white-space: nowrap; }
.tool.off, .off .tool { color: #c8c8c8; }
.off rect { fill: #fff; stroke: #b9dcf8; stroke-width: 1.400; }
.gr { stroke: #b4f0de; stroke-width: 2.400; }
.g-link { margin-left: 8px; }
.g-insert { margin-left: 45px; width: 56px; }
.ins-caret { margin: 35px 0 0 -7px; }
.g-point { margin-left: 44px; }
.g-order { margin-left: 38px; }
.g-group { margin-left: 38px; }
.g-group .tool + .tool { margin-left: 8px; }
.zoom { display: flex; align-items: flex-start; margin-left: 53px; width: 88px; }
.zoom svg { margin-top: 27px; }
.zoom-field { width: 63px; height: 37px; margin: 11px 0 0 6px; border-bottom: 2px solid #aaa; font-size: 16.500px; line-height: 43px; display: flex; justify-content: space-between; letter-spacing: .2px; }
.zoom-field svg { margin: 24px -3px 0 0; }
.g-h { margin-left: 46px; }
.g-v { margin-left: 38px; }
.g-d { margin-left: 38px; }
.g-share { margin-left: 142px; }
.login { margin-left: 24px; border-left: 1px solid #ddd; height: 30px; margin-top: 24px; padding-left: 31px; }
.login span { display: flex; align-items: center; justify-content: center; width: 173px; height: 35px; margin-top: -3px; border: 1px solid #ddd; border-radius: 5px; font-size: 18px; line-height: 1; }

/* format bar */
.formatbar { height: 44px; border-bottom: 2px solid #efefef; display: flex; font-size: 15px; }
.f { display: flex; align-items: center; border-right: 1px solid #e4e4e4; height: 42px; flex: none; }
.f:last-child { border: 0; }
.f > span { margin-top: -4px; }
.f .c { margin: 2px 12px 0 auto; }
.f1 { width: 250px; padding-left: 18px; gap: 12px; }
.f2 { width: 131px; padding-left: 12px; }
.f3 { width: 133px; padding-left: 10px; }
.f4 { width: 71px; padding-left: 12px; }
.f5 { width: 188px; padding-left: 15px; gap: 19px; }
.f5 b { width: 15px; text-align: center; color: #999; font: 700 18px/18px "Liberation Sans", Arial, sans-serif; border-bottom: 0; margin-right: 1px; }
.f5 .fa { font-weight: 400; border-bottom: 3px solid #333; color: #888; line-height: 15px; }
.f5 .fi { font-family: "Liberation Mono", monospace; font-style: italic; }
.f5 .fu { text-decoration: underline; font-size: 16px; font-weight: 700; }
.f5 svg { margin-left: -2px; }
.f6 { width: 231px; padding-left: 15px; gap: 12px; color: #999; }
.f6 .blue, .r4 .blue { color: #0090e0; }
.f6 .v1 { margin: -2px 0 0 4px; }
.f6 .v2 { margin: -2px 0 0 -3px; }
.f7 { width: 139px; padding-left: 11px; }
.f7 > span, .f8 > span { margin-top: 0; }
.sw-w { width: 16px; height: 16px; border: 1.500px solid #999; margin: 0 20px 0 25px; }
.f8 { width: 213px; padding-left: 11px; }
.uf { width: 41px; height: 26px; border-bottom: 2px solid #aaa; line-height: 19px; margin-top: 1px; letter-spacing: .3px; }
.u0 { width: 27px; margin-left: 21px; }
.sw-g { width: 15px; height: 15px; background: #777; border: 1px solid #999; margin-left: 16px; }
.d1 { margin-left: 19px; }
.d2 { margin-left: 17px; }
.f9 { padding-left: 11px; }
.f9 em { font-size: 12px; width: 27.500px; padding: 1px 0 0 5px; color: #444; }
.f9 .ew { width: 22px; padding-left: 4px; }
.f9 .eh { width: 23px; padding-left: 4px; }
.lk { margin-right: 9px; }

.work { display: flex; height: 826px; border-bottom: 1px solid #c9c9c9; }
/* side panels */
.left { width: 326px; border-right: 1px solid #c9c9c9; height: 825px; overflow: hidden; flex: none; }
.ptabs { height: 46px; border-bottom: 1px solid #c9c9c9; background: #fbfbfb; display: flex; padding: 8px 0 0 17px; line-height: 35px; }
.ptabs b { color: #0090e0; border-bottom: 4px solid #0090e0; height: 37px; }
.ptabs span { margin-left: 142px; }
.ptabs.rt { padding-left: 17px; }
.rt span { margin-left: 98px; }
.rt b + span { margin-left: 97px; }
.rt span, .rt b { width: 32px; }
.pages { height: 225px; border-bottom: 1px solid #c9c9c9; }
.psearch { margin: 0 19px; height: 42px; border-bottom: 2px solid #eee; display: flex; align-items: center; padding: 0 4px 1px 3px; }
.s-add { margin: 0 23px 0 auto; }
.s-plus { margin: 0 24px 0 auto; }
.s-cards { margin-right: 26px; }
.lib .psearch { padding-right: 11px; height: 43px; }
.tree { padding-top: 6px; }
.tree div { height: 33.900px; display: flex; align-items: center; gap: 8px; padding: 0 0 2px 35px; letter-spacing: .1px; }
.tree svg { margin-top: 2px; }
.tree .sel { background: #dffaf9; font-weight: 600; }
.libsel { margin: 0 20px 0 19px; height: 40px; border-bottom: 2px solid #999; font-size: 22.500px; line-height: 46px; display: flex; justify-content: space-between; }
.libsel svg { margin: 17px -1px 0 0; }
.crumb { display: flex; align-items: center; gap: 4px; font-size: 12.400px; letter-spacing: -.1px; color: #888; padding: 0 0 2px 17px; height: 44px; }
.widgets { display: grid; grid-template-columns: repeat(3, 107.500px); grid-auto-rows: 92.600px; padding: 6px 0 0; font-size: 12.500px; height: 376px; overflow: hidden; }
.widgets div { display: flex; flex-direction: column; align-items: center; line-height: 20px; gap: 6px; }
.widgets svg { margin-left: -3px; }
.wb { width: 35px; height: 19px; margin: 8px 3px 9px 0; border: 1px solid #888; border-radius: 3px; font: 700 8px/17px "Liberation Sans", Arial, sans-serif; text-align: center; color: #555; display: flex; justify-content: center; letter-spacing: -.1px; }
.wb2 { background: #179bd8; border-color: #179bd8; color: #fff; }
.wb3 { border-color: transparent; color: #4682c4; }
.wh { height: 36px; font: 700 29px/36px "Liberation Sans", Arial, sans-serif; letter-spacing: -2px; color: #6b6b6b; margin-right: 4px; }
.peek { margin: -1px 0 0 151px; }

/* document tabs and canvas */
.center { width: 1263px; flex: none; }
.tabs { display: flex; height: 26px; background: #cfcfcf; font-size: 12.500px; }
.tabs div { width: 86px; background: #ebebeb; color: #888; border-right: 1px solid #cfcfcf; display: flex; align-items: center; justify-content: space-between; padding: 0 9px 3px 10px; letter-spacing: .1px; }
.tabs div svg { margin-top: 5px; }
.tabs .on { background: #fff; color: #333; font-weight: 600; letter-spacing: 0; }
.more { margin: 12px 7px 0 auto; }
.stage { display: grid; grid-template-columns: 20px 1243px; grid-template-rows: 20px 779px; }
.corner { border: solid #c9c9c9; border-width: 0 1px 1px 0; background: #fff; }
.rl { font: 12.500px "Open Sans", sans-serif; fill: #858585; }
.canvas { position: relative; background: #e5e5e5; overflow: hidden; font-family: "Liberation Sans", Arial, sans-serif; }
.paper { position: absolute; left: 220px; top: 0; width: 316px; height: 779px; background: #fff; }
.w { position: absolute; white-space: nowrap; }
.sound { left: 334px; top: 37px; }
.music { left: 343px; top: 143px; font-size: 23.400px; line-height: 28px; font-weight: 700; letter-spacing: -.1px; }
.inp { left: 273px; width: 223px; height: 30px; border: 1.500px solid #ececec; background: #fff; color: #8b8b8b; font-size: 9.900px; line-height: 29px; padding-left: 21.500px; }
.i1 { top: 210px; } .i2 { top: 248px; } .i3 { top: 286px; }
.btn { left: 273px; width: 223px; height: 31px; border-radius: 4px; background: #1612b9; color: #fff; text-align: center; font-size: 9.900px; line-height: 30px; }
.b1 { top: 324px; } .b2 { top: 440px; line-height: 31px; }
.b3 { top: 478px; background: #fff; border: 1px solid #929292; color: #000; line-height: 29px; }
.or { left: 273px; top: 357px; width: 219px; display: flex; align-items: center; gap: 4px; font-size: 8.500px; line-height: 10px; }
.or i { height: 1px; background: #eaeaea; flex: 105 1 0; }
.or i:last-child { flex-grow: 100; }
.fb { left: 273px; top: 440px; } .gg { left: 273px; top: 478px; }
.vb { font: 700 9.900px/13px "DejaVu Sans", Verdana, sans-serif; text-align: center; }
.vb a { color: #1612b9; }
.disc { left: 285px; top: 399px; width: 186px; }
.terms { left: 268px; top: 547px; }
.priv { left: 318px; top: 560px; }
.acct { left: 299px; top: 613px; }
.guides { left: 0; top: 0; }
.sbh, .sbv { background: #d0d0d0; border: 1px solid #f5f5f5; border-radius: 4px; }
.sbh { left: 562px; top: 766px; width: 101px; height: 11px; }
.sbv { left: 1230px; top: 340px; width: 11px; height: 101px; }

/* style inspector */
.right { flex: none; width: 327px; border-left: 1px solid #c9c9c9; font-size: 16px; }
.s { border-bottom: 2px solid #ececec; padding-left: 19px; display: flex; }
.n { width: 76px; height: 25px; border-bottom: 1.500px solid #888; line-height: 20px; font-size: 17px; flex: none; letter-spacing: .4px; display: flex; justify-content: space-between; }
.s em { font-size: 12px; color: #555; padding: 4px 0 0 3px; line-height: 18px; }
.w48 { width: 48px; } .w30 { width: 30px; } .w25 { width: 25px; } .w37 { width: 37px; }
.n55 { width: 55px; } .n61 { width: 61px; } .n48 { width: 48px; } .n40 { width: 39px; }
.lbl { font-size: 12.500px; color: #888; display: flex; align-items: center; gap: 3px; height: 20px; }
.s-name { height: 55px; align-items: center; font-size: 22px; color: #c6c6c6; border-bottom-width: 1px; padding-bottom: 3px; }
.s-pos { height: 149px; flex-direction: column; border-bottom-width: 3px; border-color: #e7e7e7; padding-left: 20px; }
.hd { height: 50px; display: flex; align-items: center; justify-content: space-between; padding: 0 24px 1px 0; font-size: 12.500px; color: #888; margin-left: -1px; flex: none; }
.row { display: flex; height: 25px; }
.row svg { margin-top: 3px; }
.row .ml { margin-left: 10px; }
.row .lk2 { margin: 2px 10px 0 0; }
.rot { height: 29px; flex: none; font-size: 11px; line-height: 21px; padding-left: 247px; }
.s-style { height: 55px; align-items: center; padding-bottom: 2px; }
.big { font-size: 21px; width: 231px; }
.upd { display: flex; flex-direction: column; font-size: 12.500px; line-height: 20px; width: 35px; margin-top: -2px; }
.s-op { height: 50px; }
.s-op .lbl { width: 86px; margin-top: 12px; }
.slider { width: 119px; height: 4px; border-radius: 2px; background: #0090e0; margin-top: 22px; }
.slider i { display: block; width: 12px; height: 12px; border: 2.500px solid #909090; border-radius: 50%; background: #fff; margin: -4px 0 0 113px; }
.n61 { margin: 11px 0 0 19px; letter-spacing: 0; }
.s-ty { height: 254px; flex-direction: column; }
.tl { height: 45px; flex: none; margin-bottom: 1px; }
.sel1, .sel2 { border-bottom: 1.500px solid #999; height: 28px; line-height: 24px; display: flex; justify-content: space-between; align-items: center; flex: none; width: 286px; padding-bottom: 2px; }
.sel1 svg { margin: 9px -1px 0 0; }
.sel2 { width: 143px; height: 27px; }
.sel2 svg { margin-right: -1px; }
.r2 { display: flex; margin-top: 19px; }
.n48 { margin-left: 36px; height: 27px; line-height: 23px; }
.swatch { width: 40px; height: 25px; border: 1.500px solid #ccc; border-radius: 3px; display: flex; align-items: center; justify-content: center; flex: none; }
.swatch i { width: 33px; height: 18px; border: 1.500px solid #888; }
.r2 .swatch { margin: 2px 0 0 20px; }
.swatch .dk { background: #333; } .swatch .gy { background: #777; }
.r3 { display: flex; margin-top: 19px; height: 52px; flex: none; font-size: 12.500px; text-align: center; line-height: 25px; }
.r3 .n { width: 100%; height: 27px; line-height: 24px; color: #c9c9c9; font-size: 16px; white-space: nowrap; letter-spacing: .2px; padding-left: 1px; }
.st73 { width: 73px; } .st47 { width: 47px; margin-left: 20px; }
.r3 span { display: block; white-space: nowrap; }
.r3 .aa { margin: 24px 0 0 35px; width: 19px; height: 19px; border-bottom: 2px solid #999; font-size: 15px; line-height: 17px; color: #777; letter-spacing: -.3px; font-weight: 600; }
.tt { margin: 27px 0 0 11px; }
.r4 { display: flex; align-items: center; height: 57px; flex: none; gap: 11px; padding: 1px 0 0 4px; color: #999; }
.r4 .v1 { margin-left: 59px; }
.r4 .v2 { margin-left: -2px; }
.s-fill { height: 75px; padding-top: 14px; }
.st { width: 40px; display: flex; flex-direction: column; align-items: center; font-size: 12.500px; line-height: 25px; white-space: nowrap; }
.s-fill .lbl, .s-line .lbl { width: 105px; margin-top: -2px; }
.m31 { margin-left: 31px; } .m27 { margin-left: 27px; } .m13 { margin-left: 13px; }
.s-line { height: 140px; flex-direction: column; padding-top: 14px; }
.lr { display: flex; height: 67px; }
.ic { height: 24px; display: flex; align-items: center; padding-top: 2px; margin-bottom: 1px; }
.lr2 { display: flex; justify-content: flex-end; padding-right: 18px; gap: 22px; }
.st52 { width: 52px; }

/* taskbar */
.taskbar { position: relative; height: 60px; background: radial-gradient(ellipse 500px 40px at 860px 0, #444646, transparent), radial-gradient(ellipse 500px 30px at 300px 0, #454747, transparent), linear-gradient(#303131, #242526 45%, #181818); display: flex; color: #0a0a0a; border-top: 1px solid #3a3b3c; }
.weather { margin: 17px 0 0 26px; }
.wx { display: flex; flex-direction: column; font-size: 14.500px; line-height: 20px; margin: 9px 0 0 10px; width: 40px; white-space: nowrap; }
.apps { margin-left: 499px; display: flex; align-items: center; width: 722px; height: 58px; }
.tsearch { width: 123px; height: 38px; border-radius: 19px; background: #c1c1c1; margin: 0 18px; display: flex; align-items: center; justify-content: center; gap: 6px; font-size: 15px; padding-bottom: 1px; }
.a-store { margin-left: 25px; } .a-mail { margin-left: 25px; } .a-ghost { margin-left: 28px; } .a-bird { margin-left: 27px; } .a-word { margin-left: 27px; } .a-chrome { margin-left: 24px; } .a-edge { margin-left: 26px; } .a-ne { margin-left: 25px; }
.wd { font: 700 13px "Liberation Sans", sans-serif; fill: #fff; }
.ax { margin-left: 16px; width: 44px; height: 48px; border-radius: 4px; background: #969696; box-shadow: 2px 0 #333, 4px 0 #999; flex: none; display: flex; flex-direction: column; align-items: center; padding-top: 9px; }
.ax div { width: 29px; height: 28px; border-radius: 4px; background: #f8f8f8; display: flex; align-items: center; justify-content: center; }
.ax::after { content: ""; width: 20px; height: 4px; border-radius: 2px; background: #0078d4; margin-top: 7px; }
.tray { margin-left: 89px; display: flex; align-items: center; height: 58px; }
.y1 { margin-left: 11px; } .y2 { margin-left: 13px; }
.tb { margin-left: 16px; width: 22px; font: 700 18px "Liberation Sans", sans-serif; letter-spacing: -4px; }
.y3 { margin-left: 7px; } .y4 { margin-left: 11px; } .y5 { margin-left: 13px; } .y6 { margin-left: 12px; }
.ep { font: 700 6px "Liberation Sans", sans-serif; fill: #fff; letter-spacing: -.4px; }
.zh { margin-left: 15px; width: 18px; font-size: 18px; line-height: 20px; margin-top: -4px; }
.y7 { margin-left: 21px; } .y8 { margin-left: 10px; } .y9 { margin-left: 16px; }
.clock { width: 86px; text-align: right; display: flex; flex-direction: column; font-size: 14.500px; line-height: 20px; margin-top: -2px; letter-spacing: -.3px; }
.y10 { margin-left: 12px; }
.insta { position: absolute; right: 8px; top: -1px; font: 9.800px/10px "Liberation Serif", serif; color: #6c766f; width: 188px; white-space: nowrap; }
.insta span { color: #414743; }
```
